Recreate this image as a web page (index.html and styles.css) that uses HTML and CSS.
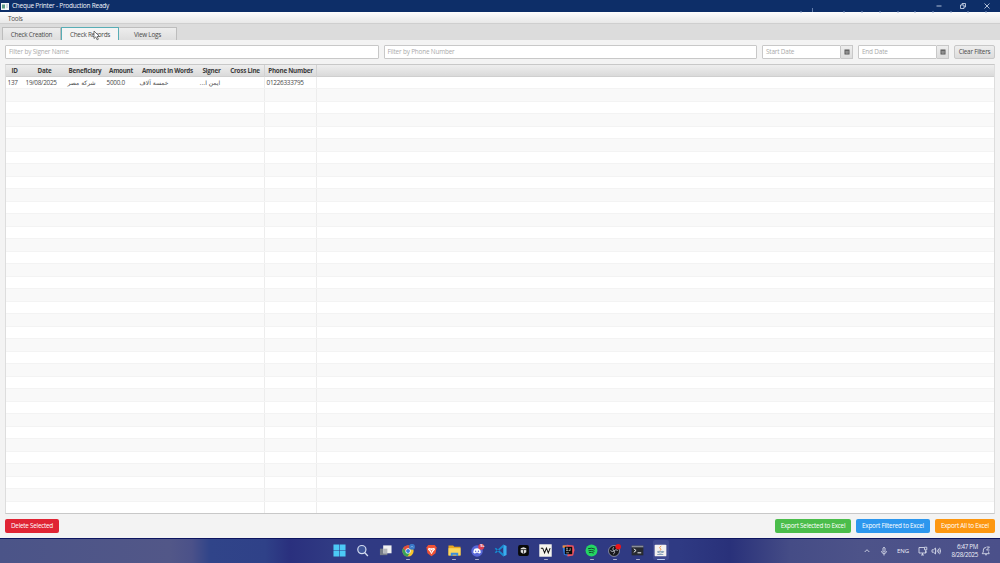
FILE: index.html
```html
<!DOCTYPE html>
<html lang="en">
<head>
    <meta charset="UTF-8">
    <title>Cheque Printer - Production Ready</title>
    <link rel="stylesheet" href="styles.css">
</head>
<body>
    <div class="window">
        <header class="titlebar">
            <svg class="app_icon" viewBox="0 0 8 7"><rect width="8" height="7" fill="#f4f6f8"/><rect x="1" y="1.500" width="3" height="4" fill="#5a9a84"/><path d="M5 2h2M5 4h2" stroke="#8fa5b8" stroke-width=".8"/></svg>
            <h1>Cheque Printer - Production Ready</h1>
            <svg class="specks" viewBox="0 0 190 5"><path d="M12.500 0v4" stroke="#8ba0c8" stroke-width=".7"/><path d="M0 4h2M43 4h2M61 4h2M79 4h2M97 4h2M114 4h2M132 4h2M150 4h2M167 4h2M185 4h2" stroke="#8ba0c8" stroke-width=".9"/></svg>
            <div class="window_btns">
                <svg viewBox="0 0 8 8"><path d="M1.500 4h5"/></svg>
                <svg viewBox="0 0 8 8"><path d="M1.500 3h3.500v3.500H1.500zM3 3V1.500h3.500V5H5"/></svg>
                <svg viewBox="0 0 8 8"><path d="M1.500 1.500l5 5M6.500 1.500l-5 5"/></svg>
            </div>
        </header>
        <nav class="menubar"><span>Tools</span></nav>
        <div class="tabs">
            <div class="tab tab_creation">Check Creation</div>
            <div class="tab tab_records active">Check Records</div>
            <div class="tab tab_logs">View Logs</div>
            <svg class="cursor" viewBox="0 0 8 11"><path d="M1 1v7.500l1.800-1.600 1.300 2.900 1.300-.6-1.300-2.700h2.400z" fill="#fff" stroke="#444" stroke-width=".7"/></svg>
        </div>
        <main class="content">
            <div class="filters">
                <div class="field grow">Filter by Signer Name</div>
                <div class="field grow">Filter by Phone Number</div>
                <div class="date">
                    <div class="field">Start Date</div>
                    <div class="date_btn"><svg viewBox="0 0 6 6"><path d="M.5.5h5v5h-5z" fill="#555"/><path d="M1 2.200h4M1 3.800h4M2.300 2v3M3.800 2v3" stroke="#ccc" stroke-width=".4"/></svg></div>
                </div>
                <div class="date">
                    <div class="field">End Date</div>
                    <div class="date_btn"><svg viewBox="0 0 6 6"><path d="M.5.5h5v5h-5z" fill="#555"/><path d="M1 2.200h4M1 3.800h4M2.300 2v3M3.800 2v3" stroke="#ccc" stroke-width=".4"/></svg></div>
                </div>
                <div class="clear_btn">Clear Filters</div>
            </div>
            <div class="records" id="records">
                <div class="row head">
                    <span>ID</span><span>Date</span><span>Beneficiary</span><span>Amount</span><span>Amount in Words</span><span>Signer</span><span>Cross Line</span><span>Phone Number</span><span></span>
                </div>
                <div class="row">
                    <span>137</span><span>19/08/2025</span><span dir="rtl" class="ar">شركة مصر</span><span>5000.0</span><span dir="rtl" class="ar">خمسة آلاف</span><span dir="rtl" class="ar">ايمن ا...</span><span></span><span>01226333795</span><span></span>
                </div>
            </div>
            <div class="actions">
                <div class="btn red">Delete Selected</div>
                <div class="btn green">Export Selected to Excel</div>
                <div class="btn blue">Export Filtered to Excel</div>
                <div class="btn orange">Export All to Excel</div>
            </div>
        </main>
    </div>
    <footer class="taskbar">
        <div class="apps">
            <!-- Start -->
            <div class="app"><svg viewBox="0 0 14 14"><path d="M.5.5h6.200v6.200H.5zM7.300.5h6.200v6.200H7.300zM.5 7.300h6.200v6.200H.5zM7.300 7.300h6.200v6.200H7.300z" fill="#4cc9f5"/></svg></div>
            <!-- Search -->
            <div class="app"><svg viewBox="0 0 14 14"><circle cx="6.300" cy="6" r="4.400" fill="#3f5599" stroke="#d4dcf0" stroke-width="1.300"/><path d="M9.500 9.500l3.300 3.300" stroke="#d4dcf0" stroke-width="1.500"/></svg></div>
            <!-- Task view -->
            <div class="app"><svg viewBox="0 0 14 14"><path d="M1 5h8v7H1z" fill="#777d88"/><path d="M4.500 1.500h9V10h-9z" fill="#f1f1f1"/><path d="M4.500 5H9v5H4.500z" fill="#b5b7bc"/></svg></div>
            <!-- Chrome -->
            <div class="app open"><svg viewBox="0 0 14 14"><circle cx="6.500" cy="7.500" r="6" fill="#f7c52d"/><path d="M1.300 4.500A6 6 0 0 1 12 5H6.500v2.500L4 9z" fill="#e34b3d"/><path d="M1.300 4.500A6 6 0 0 0 6 13.500l3-5-4 .5z" fill="#38a456"/><circle cx="6.500" cy="7.500" r="2.800" fill="#fff"/><circle cx="6.500" cy="7.500" r="2.100" fill="#3978dc"/><circle cx="10.800" cy="3" r="3.200" fill="#3978c7"/><path d="M9.300 3.500l1.500-1 1.500 1" stroke="#9cc8f2" fill="none" stroke-width=".7"/></svg></div>
            <!-- Brave -->
            <div class="app"><svg viewBox="0 0 14 14"><path d="M3.500 1h7L12.500 3.700l-1.200 6.300L7 13.300 2.700 10 1.500 3.700z" fill="#f05235"/><path d="M4 4l1.500.5h3L10 4l.8 2-2 2.200L7 11 5.200 8.200 3.200 6z" fill="#fff"/><path d="M5 6l2 1 2-1M7 7v2" stroke="#f05235" fill="none" stroke-width=".7"/></svg></div>
            <!-- Explorer -->
            <div class="app open"><svg viewBox="0 0 14 14"><path d="M.5 1.500h5l1.300 1.500h6.700V12H.5z" fill="#e9a720"/><path d="M.5 4.500h13v8H.5z" fill="#fbd75e"/><path d="M3 9.500h8V13H9v-1.500H5V13H3z" fill="#3b8edb"/></svg></div>
            <!-- Discord -->
            <div class="app open"><svg viewBox="0 0 14 14"><circle cx="6.500" cy="7.500" r="6.200" fill="#5968d8"/><path d="M3.800 5q2.700-1 5.400 0 1.500 2 1.300 4.500l-2 1-.5-1H5l-.5 1-2-1Q2.300 7 3.800 5z" fill="#fff"/><circle cx="5" cy="7.700" r=".8" fill="#5968d8"/><circle cx="8" cy="7.700" r=".8" fill="#5968d8"/><circle cx="11" cy="3" r="3.200" fill="#dd3e50"/></svg><b class="badge">9+</b></div>
            <!-- VS Code -->
            <div class="app"><svg viewBox="0 0 14 14"><path d="M10 .5v13l3.500-1.700V2.200z" fill="#39aef0"/><path d="M.8 5l1.200-1 8 6.500v3zM.8 9l1.200 1 8-6.500v-3z" fill="#168bd0"/></svg></div>
            <!-- Cube app -->
            <div class="app"><svg viewBox="0 0 14 14"><rect x="1.200" y="1.200" width="11.600" height="11.600" rx="2" fill="#080909"/><path d="M4 4.500l3-1 3 1V9l-3 1.800L4 9z" fill="#ddd"/><path d="M3.500 6h7M7 6.500v4" stroke="#111" fill="none" stroke-width=".8"/></svg></div>
            <!-- W app -->
            <div class="app open"><svg viewBox="0 0 14 14"><rect x=".3" y=".3" width="13.400" height="13.400" fill="#f5f4ed"/><path d="M2 4.500h2L6 9.500l2-5 2 5 2-5" stroke="#111" stroke-width="1.100" fill="none"/></svg></div>
            <!-- IntelliJ -->
            <div class="app"><svg viewBox="0 0 14 14"><path d="M.5 2l6.300-1.300V13L2 11.500z" fill="#2f7de5"/><path d="M5 .8l7.300.7 1.200 5L12 12.500l-6 1z" fill="#ef5562"/><path d="M.7 1.500H5V4H.7z" fill="#f88a36"/><path d="M3 3h8v8H3z" fill="#090909"/><path d="M4.500 4.500h1.800M5.400 4.500v2.600M4.500 7.100h1.800M8.800 4.500v2.600H7M4.500 9.500h3" stroke="#fff" stroke-width=".6" fill="none"/></svg></div>
            <!-- Spotify -->
            <div class="app open"><svg viewBox="0 0 14 14"><circle cx="7" cy="7" r="6.400" fill="#24d564"/><path d="M3.400 5q4-1.200 7.400.6M3.800 7.300q3.500-1 6.400.6M4.200 9.300q3-.7 5.200.5" fill="none" stroke="#133d29" stroke-width="1"/></svg></div>
            <!-- OBS -->
            <div class="app open"><svg viewBox="0 0 14 14"><circle cx="6.500" cy="7.500" r="5.900" fill="#16171b" stroke="#b5b9c4" stroke-width=".7"/><path d="M6 3.500q-2 2 .5 4 2 2-1 3.500M10.500 7q-2-2-4 .5-2 1.500-4-.5" fill="none" stroke="#c6c8d0" stroke-width=".9"/><circle cx="11" cy="3" r="3" fill="#ed1519"/></svg></div>
            <!-- Terminal -->
            <div class="app open"><svg viewBox="0 0 14 14"><path d="M.7 1.800h12.600v10.400H.7z" fill="#272a30"/><path d="M.7 1.800h12.600v1.800H.7z" fill="#8a8e98"/><path d="M3 5.200L5.500 7 3 9M7 9.500h4" stroke="#fff" fill="none"/></svg></div>
            <!-- Java -->
            <div class="app open current"><svg viewBox="0 0 14 14"><rect x=".7" y=".7" width="12.600" height="12.600" rx="1" fill="#f4f1ef"/><path d="M7.800 2q-3 2-.8 3.200 1 1-.5 2" fill="none" stroke="#e6893d"/><path d="M4 8h5.500v1Q7 10.600 4 9zM9.500 8q2 0 .2 1.300M3.500 11.300h6.500" fill="none" stroke="#6284a6" stroke-width=".8"/></svg></div>
        </div>
        <div class="tray">
            <svg class="chev" viewBox="0 0 8 10"><path d="M1.700 6L4 3.700 6.300 6"/></svg>
            <svg class="mic" viewBox="0 0 8 10"><path d="M3 2q1-1.500 2 0v3.500q-1 1.500-2 0zM1.500 5q.5 2.800 2.500 2.800T6.500 5M4 8v1.500"/></svg>
            <span class="lang">ENG</span>
            <svg class="net" viewBox="0 0 10 10"><path d="M6 1.500H1v5.500h7V5M3 9h3M4.500 7v2M6.500 1.200h2.300v2.600H6.500zM7.700 4v3"/></svg>
            <svg class="vol" viewBox="0 0 10 10"><path d="M1 3.800h1.500L4.500 2v6L2.500 6.200H1zM6 3.700q.8 1.300 0 2.600M7.300 2.700q1.500 2.300 0 4.600M8.600 1.800q2 3.200 0 6.400"/></svg>
            <div class="clock"><span>6:47 PM</span><span>8/28/2025</span></div>
            <svg class="bell" viewBox="0 0 10 10"><path d="M5 1.500Q2.300 1.500 2.300 4v2L1.200 7.700h7L7.500 6V5.500M4 8.500q1 1 2 0M5.500 1h3l-3 3h3"/></svg>
        </div>
    </footer>
    <script>
        const records = document.querySelector('#records');

        // fill the rest of the table with empty rows
        for (let i = 0; i < 34; i++) {
            const row = document.createElement('div');
            row.className = 'row';
            row.innerHTML = '<span></span>'.repeat(9);
            records.appendChild(row);
        }
    </script>
</body>
</html>
```
FILE: styles.css
```css
:root {
    --navy: #0d2e68;
    --bg: #f3f3f3;
    --line: #c8c8c8;
    --text: #4a4a4a;
}
* {
    box-sizing: border-box;
    padding: 0;
    margin: 0;
}
body {
    width: 1000px;
    height: 563px;
    overflow: hidden;
    display: flex;
    flex-direction: column;
    background: var(--bg);
    color: var(--text);
    font-family: "Open Sans", "Noto Sans", sans-serif;
    font-size: 6.4px;
    letter-spacing: -.27px;
    line-height: 10px;
    white-space: nowrap;
}
svg {
    display: block;
}
.window {
    height: 538px;
    display: flex;
    flex-direction: column;
}

/* Title bar */
.titlebar {
    height: 12px;
    flex: none;
    display: flex;
    align-items: center;
    background: var(--navy);
    color: #f2f5fa;
    position: relative;
}
.app_icon {
    width: 8px;
    height: 7px;
    margin: 0 3px 0 1px;
}
.titlebar h1 {
    font-size: 6.5px;
    letter-spacing: -.24px;
    font-weight: 400;
}
.specks {
    position: absolute;
    left: 800px;
    top: 8px;
    width: 190px;
    height: 5px;
}
.window_btns {
    margin-left: auto;
    display: flex;
    gap: 16px;
    padding-right: 9px;
}
.window_btns svg {
    width: 8px;
    height: 8px;
    fill: none;
    stroke: #dbe3f2;
    stroke-width: .8;
}

/* Menu */
.menubar {
    height: 12px;
    flex: none;
    padding: 2px 8px;
    background: linear-gradient(#fdfdfd, #e8e8e8);
    border-bottom: 1px solid #cfcfcf;
}

/* Tabs */
.tabs {
    height: 16px;
    flex: none;
    display: flex;
    align-items: flex-end;
    padding-left: 2px;
    background: #dcdcdc;
    position: relative;
}
.tab {
    height: 13px;
    line-height: 13px;
    text-align: center;
    border: 1px solid #bdbdbd;
    border-bottom: none;
    background: linear-gradient(#ededed, #dedede);
    border-radius: 1px 1px 0 0;
}
.tab_creation {
    width: 59px;
}
.tab_records {
    width: 58px;
}
.tab_logs {
    width: 58px;
    border-left: none;
}
.tab.active {
    background: #f4f4f4;
    border-color: #58adb5;
}
.cursor {
    position: absolute;
    left: 93px;
    top: 6px;
    width: 8px;
    height: 11px;
}

/* Filters */
.content {
    flex: 1;
    display: flex;
    flex-direction: column;
    padding: 5px 5px 0;
}
.filters {
    height: 14px;
    display: flex;
    gap: 5px;
}
.field {
    height: 14px;
    padding: 0 3px;
    line-height: 12px;
    border: 1px solid var(--line);
    border-radius: 1px;
    background: #fff;
    color: #aaa;
    letter-spacing: -.18px;
}
.grow {
    flex: 1;
}
.date {
    display: flex;
    width: 91px;
}
.date .field {
    width: 79px;
}
.date_btn {
    flex: 1;
    display: flex;
    align-items: center;
    justify-content: center;
    border: 1px solid var(--line);
    border-left: none;
    background: linear-gradient(#eee, #ddd);
}
.date_btn svg {
    width: 6px;
    height: 6px;
}
.clear_btn {
    width: 41px;
    line-height: 12px;
    text-align: center;
    border: 1px solid var(--line);
    border-radius: 2px;
    background: linear-gradient(#eee, #dcdcdc);
}

/* Table */
.records {
    height: 450px;
    margin-top: 5px;
    overflow: hidden;
    border: 1px solid var(--line);
    border-left-color: #ddd;
    border-right-color: #ddd;
    background: #fff;
}
.row {
    display: grid;
    grid-template-columns: 18px 42px 39px 33px 60px 28px 39px 52px 1fr;
    height: 12.5px;
    line-height: 11.5px;
    border-bottom: 1px solid #f3f3f3;
}
.row:nth-child(odd) {
    background: #f9f9f9;
}
.row span {
    padding-left: 1.5px;
    border-right: 1px solid transparent;
}
.row span:nth-child(7), .row span:nth-child(8) {
    border-right-color: #ededed;
}
.row .ar {
    font-family: "DejaVu Sans", sans-serif;
    font-size: 6px;
    letter-spacing: 0;
    text-align: left;
}
.row.head {
    height: 11.5px;
    line-height: 11.5px;
    background: linear-gradient(#eee, #dadada);
    border-bottom-color: #cfcfcf;
    color: #3c3c3c;
    font-weight: 700;
    font-size: 6.3px;
    letter-spacing: -.25px;
}
.row.head span {
    padding: 0;
    text-align: center;
}
.row.head span:nth-child(7), .row.head span:nth-child(8) {
    border-right-color: #d2d2d2;
}

/* Buttons */
.actions {
    display: flex;
    gap: 5px;
    margin-top: 5px;
}
.btn {
    height: 14px;
    line-height: 14px;
    border-radius: 2px;
    color: #fff;
    text-align: center;
}
.red {
    width: 54px;
    margin-right: auto;
    background: #e02434;
}
.green {
    width: 76px;
    background: #4bbd4b;
}
.blue {
    width: 74px;
    background: #2c97ee;
}
.orange {
    width: 60px;
    background: #fd9710;
}

/* Taskbar */
.taskbar {
    height: 25px;
    display: flex;
    align-items: center;
    border-top: 1px solid #0d1560;
    background: linear-gradient(90deg, #4b5488 0, #525788 170px, #4b5189 192px, #304489 210px, #2f4188 265px, #2a307e 290px, #303a83 330px, #2f3a83 680px, #29317a 730px, #454c86 790px, #4d5389 860px, #4b508a 1000px);
    color: #eef0f8;
}
.apps {
    display: flex;
    gap: 6.93px;
    margin: 0 0 2px 331.7px;
}
.app {
    width: 16px;
    height: 20px;
    display: flex;
    align-items: center;
    justify-content: center;
    position: relative;
}
.app svg {
    width: 13px;
    height: 13px;
}
.app.open::after {
    content: "";
    position: absolute;
    left: 6px;
    bottom: 0;
    width: 4px;
    height: 1px;
    border-radius: 1px;
    background: #a9adcc;
}
.app.current {
    background: #3f4990;
    border-radius: 2px;
}
.app.current::after {
    left: 4px;
    width: 8px;
    background: #b7c8f0;
}
.badge {
    position: absolute;
    right: 1px;
    top: 3px;
    font-size: 4px;
    line-height: 6px;
}
.tray {
    margin: 0 0 1px auto;
    display: flex;
    align-items: center;
    padding-right: 9px;
}
.tray svg {
    height: 10px;
    fill: none;
    stroke: #e5e8f4;
    stroke-width: .8;
}
.chev, .mic {
    width: 8px;
}
.mic {
    margin-left: 9px;
}
.lang {
    width: 13px;
    margin-left: 9px;
    font-size: 6px;
    letter-spacing: 0;
}
.net, .vol, .bell {
    width: 10px;
}
.net {
    margin-left: 8px;
}
.vol {
    margin-left: 3px;
}
.clock {
    width: 37px;
    display: flex;
    flex-direction: column;
    text-align: right;
    font-size: 6.2px;
    letter-spacing: -.3px;
    line-height: 8px;
}
.bell {
    margin-left: 3px;
}
```
